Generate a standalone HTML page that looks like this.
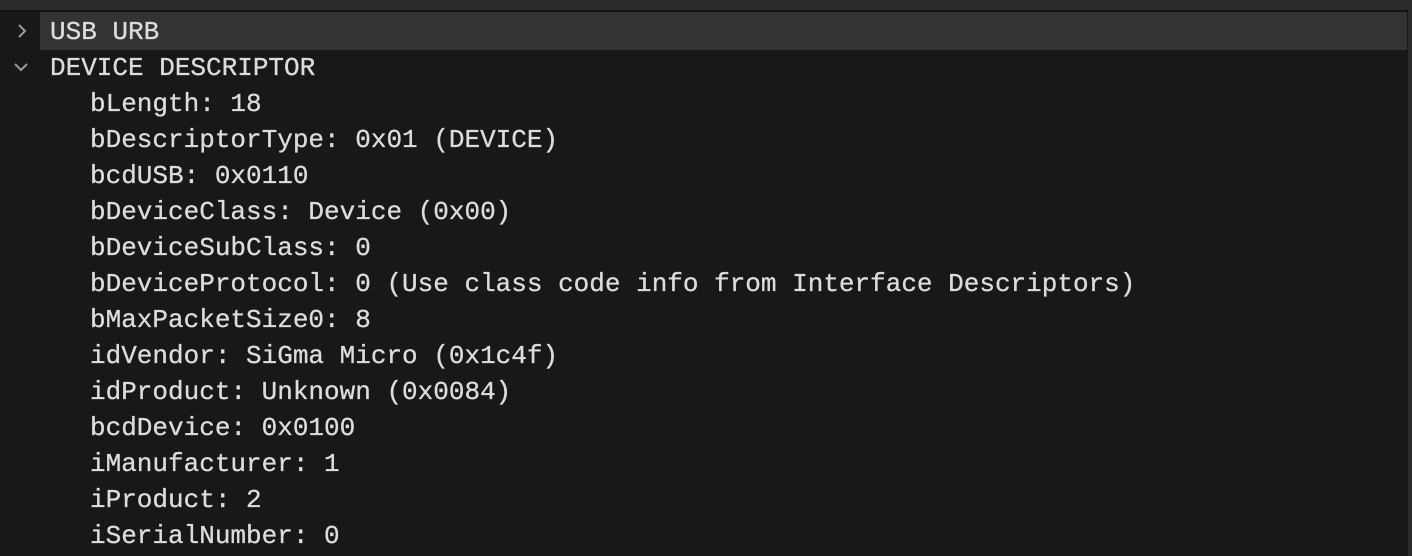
<!DOCTYPE html>
<html><head><style>
body{margin:0;width:1412px;height:556px;background:#181818;overflow:hidden;position:relative;font-family:"Liberation Mono",monospace;font-size:26px;color:#dcdcdc}
.top{position:absolute;left:0;top:0;width:1412px;height:10px;background:#2a2a2a}
.line{position:absolute;left:0;top:10px;width:1412px;height:2px;background:#141414}
.rb{position:absolute;right:0;top:10px;width:4px;height:546px;background:#2a2a2a}
.hl{position:absolute;left:40px;top:12px;width:1367px;height:38px;background:#333}
.r{position:absolute;height:36px;line-height:36px;white-space:pre;-webkit-text-stroke:0.3px #dcdcdc}
.ch{position:absolute}
</style></head><body>
<div class="top"></div><div class="line"></div><div class="rb"></div><div class="hl"></div>
<svg class="ch" style="left:14px;top:22px" width="18" height="18" viewBox="0 0 18 18"><path d="M5 3l6 6-6 6" fill="none" stroke="#9a9a9a" stroke-width="2"/></svg>
<svg class="ch" style="left:12px;top:58px" width="18" height="18" viewBox="0 0 18 18"><path d="M3 6l6 6 6-6" fill="none" stroke="#9a9a9a" stroke-width="2"/></svg>
<div class="r" style="left:50px;top:14px">USB URB</div>
<div class="r" style="left:50px;top:50px">DEVICE DESCRIPTOR</div>
<div class="r" style="left:90px;top:86px">bLength: 18</div>
<div class="r" style="left:90px;top:122px">bDescriptorType: 0x01 (DEVICE)</div>
<div class="r" style="left:90px;top:158px">bcdUSB: 0x0110</div>
<div class="r" style="left:90px;top:194px">bDeviceClass: Device (0x00)</div>
<div class="r" style="left:90px;top:230px">bDeviceSubClass: 0</div>
<div class="r" style="left:90px;top:266px">bDeviceProtocol: 0 (Use class code info from Interface Descriptors)</div>
<div class="r" style="left:90px;top:302px">bMaxPacketSize0: 8</div>
<div class="r" style="left:90px;top:338px">idVendor: SiGma Micro (0x1c4f)</div>
<div class="r" style="left:90px;top:374px">idProduct: Unknown (0x0084)</div>
<div class="r" style="left:90px;top:410px">bcdDevice: 0x0100</div>
<div class="r" style="left:90px;top:446px">iManufacturer: 1</div>
<div class="r" style="left:90px;top:482px">iProduct: 2</div>
<div class="r" style="left:90px;top:518px">iSerialNumber: 0</div>
</body></html>
